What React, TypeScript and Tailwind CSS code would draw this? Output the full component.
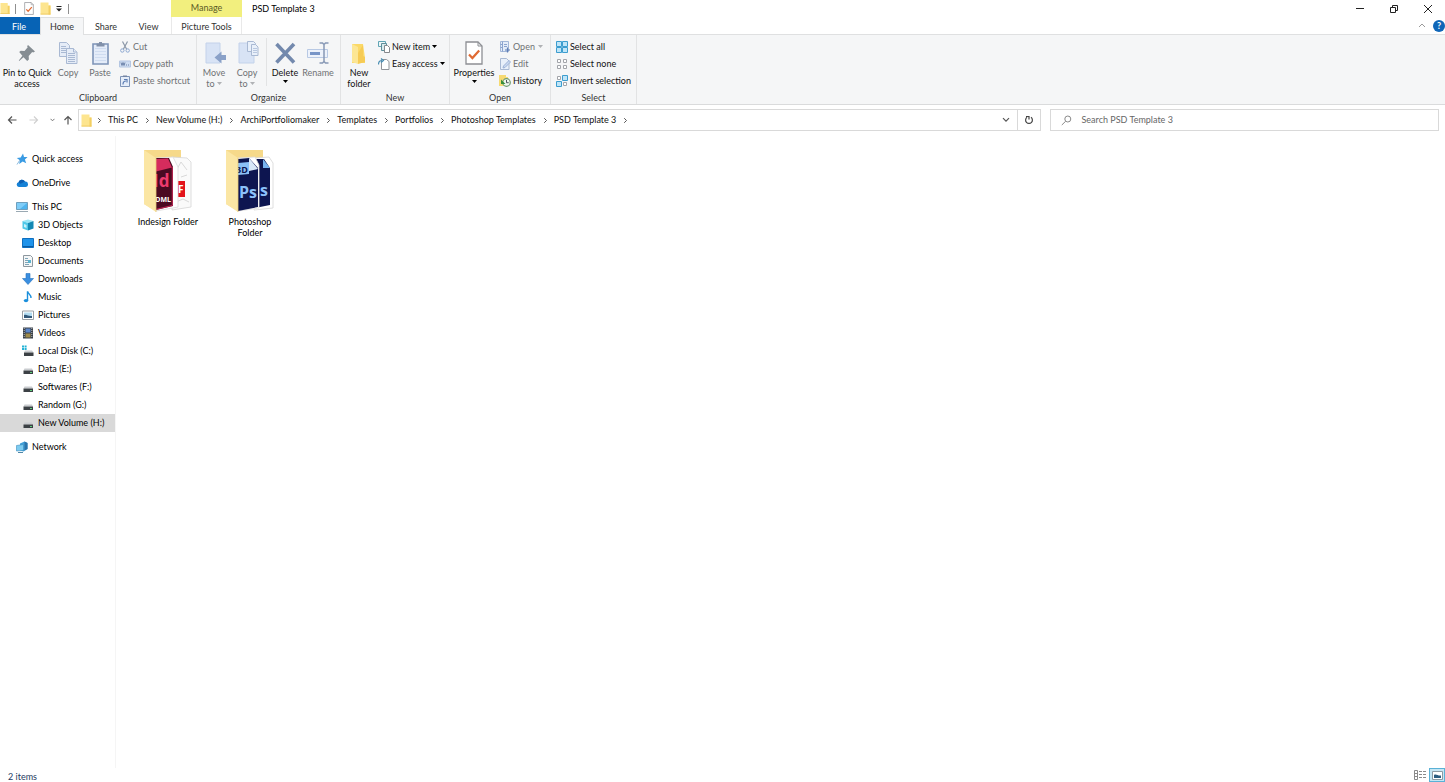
import { useState } from 'react';
import type { ReactNode } from 'react';

interface IconProps {
  className?: string;
}

/* ---------- Small icons ---------- */

const FolderIcon = ({ className = 'w-[11px] h-[13px]' }: IconProps) => (
  <svg viewBox="0 0 11 13" className={className} aria-hidden="true">
    <path d="M0.5 0.5h8v3h2v9h-10z" fill="#fde58f" />
    <path d="M8.5 3.5h2v9h-2z" fill="#f3cf63" />
    <path d="M0.5 11.6h10v0.9h-10z" fill="#efcb62" />
  </svg>
);

const CheckPageIcon = ({ className = 'w-[10px] h-[13px]' }: IconProps) => (
  <svg viewBox="0 0 18 24" className={className} aria-hidden="true">
    <path d="M1 1h12l4 4v18H1z" fill="#fff" stroke="#8d8f94" strokeWidth="1.3" />
    <path d="M13 1v4h4" fill="none" stroke="#8d8f94" />
    <path d="M4 13.5l3.4 3.6 6.8-7.6" fill="none" stroke="#e06a33" strokeWidth="2.2" />
  </svg>
);

const Chevron = ({ className = 'w-[5px] h-[7px]' }: IconProps) => (
  <svg viewBox="0 0 5 7" className={className} aria-hidden="true">
    <path d="M1.2 1.2l2.3 2.3-2.3 2.3" fill="none" stroke="#555" />
  </svg>
);

const Caret = ({ className = 'text-black' }: IconProps) => (
  <svg viewBox="0 0 5 3" className={`w-[5px] h-[3px] ${className}`} aria-hidden="true">
    <path d="M0 0h5L2.5 3z" fill="currentColor" />
  </svg>
);

/* ---------- Ribbon icons ---------- */

const PinIcon = () => (
  <svg viewBox="0 0 24 24" className="w-6 h-6" aria-hidden="true">
    <path d="M13 4l7 6.5-1.8 1-1-.4-3.5 3.8.2 3.6-1.7 1.4-3.7-3.7L4.2 20l-.4-.4 3.6-4.8L4.2 11l1.5-1.3 3.8.2 3.2-3.6-.6-1z" fill="#858d93" />
  </svg>
);

const CopyIcon = () => (
  <svg viewBox="0 0 24 24" className="w-6 h-6" aria-hidden="true">
    <g fill="#e5ecf7" stroke="#a9b9d3">
      <path d="M3.5 1.5h7l3 3v11h-10z" />
      <path d="M5 5.5h5M5 7.5h6M5 9.5h6M5 11.5h6" />
      <path d="M10.5 7.5h7l3.5 3.5v11.5h-10.5z" />
      <path d="M17.5 7.5v3.5h3.5M12 12.5h7M12 14.5h7M12 16.5h7M12 18.5h7M12 20.5h7" />
    </g>
  </svg>
);

const PasteIcon = () => (
  <svg viewBox="0 0 24 24" className="w-6 h-6" aria-hidden="true">
    <path d="M5 3h15v20H5z" fill="#e4ecf9" stroke="#7e94b8" strokeWidth="1.6" />
    <path d="M7 7.5h11M7 10.5h11M7 13.5h11M7 16.5h11M7 19.5h11" stroke="#cfdcf0" />
    <path d="M8.5 2.5h2.5V1h3v1.5h2.5v3h-8z" fill="#8190a9" />
  </svg>
);

const CutIcon = () => (
  <svg viewBox="0 0 12 12" className="w-3 h-3" aria-hidden="true">
    <path d="M3.5 0.5l4.3 8M8.5 0.5l-4.3 8" stroke="#8b97a8" strokeWidth="1.2" />
    <circle cx="3.3" cy="9.5" r="1.7" fill="none" stroke="#8ea9d2" />
    <circle cx="8.7" cy="9.5" r="1.7" fill="none" stroke="#8ea9d2" />
  </svg>
);

const CopyPathIcon = () => (
  <svg viewBox="0 0 12 12" className="w-3 h-3" aria-hidden="true">
    <path d="M0.5 3h11v6h-11z" fill="#cfddf2" stroke="#b4c6e2" />
    <path d="M2 4.5l1 3 1-3 1 3 1-3M7 7h1M9 7h1" fill="none" stroke="#6b82a8" />
  </svg>
);

const PasteShortcutIcon = () => (
  <svg viewBox="0 0 12 12" className="w-3 h-3" aria-hidden="true">
    <path d="M1.5 1.5h9v10h-9z" fill="#e5edf9" stroke="#7e94b8" />
    <path d="M4 0.5h4v1.5H4z" fill="#7485a3" />
    <path d="M4 9.5c0-2.5 1-3.5 3-3.5M5 4.5h3v3" fill="none" stroke="#5b7cb3" strokeWidth="1.2" />
  </svg>
);

const MoveToIcon = () => (
  <svg viewBox="0 0 24 24" className="w-6 h-6" aria-hidden="true">
    <path d="M4 2h14v20H4z" fill="#d8e3f5" stroke="#c3d2ea" />
    <path d="M24 14v5h-4.5v3.5l-7-6 7-6V14z" fill="#8aa1c8" />
  </svg>
);

const CopyToIcon = () => (
  <svg viewBox="0 0 24 24" className="w-6 h-6" aria-hidden="true">
    <path d="M4 2h15v20H4z" fill="#d8e3f5" stroke="#c3d2ea" />
    <path d="M12.5 0.5h6l2 2v8h-8z" fill="#e9f0fa" stroke="#a9b9d3" />
    <path d="M16.5 3.5h4l2.5 2.5v8.5h-6.5z" fill="#e9f0fa" stroke="#a9b9d3" />
    <path d="M18 7.5h4M18 9.5h4M18 11.5h4" stroke="#b9c8e0" />
  </svg>
);

const DeleteIcon = () => (
  <svg viewBox="0 0 24 24" className="w-6 h-6" aria-hidden="true">
    <path d="M3.5 3L21 21.5M21 3L3.5 21.5" stroke="#7389ad" strokeWidth="3.6" />
  </svg>
);

const RenameIcon = () => (
  <svg viewBox="0 0 24 24" className="w-6 h-6" aria-hidden="true">
    <path d="M1.5 8.5h20v8h-20z" fill="#edf2fb" stroke="#b8c9e4" />
    <path d="M4 11h10v3H4z" fill="#7895c7" />
    <path d="M13.5 2h3L18 3.5 19.5 2h3M18 3.5v17M13.5 22h3l1.5-1.5 1.5 1.5h3" fill="none" stroke="#8798b5" strokeWidth="1.5" />
  </svg>
);

const NewFolderIcon = () => (
  <svg viewBox="0 0 24 24" className="w-6 h-6" aria-hidden="true">
    <path d="M5 3h11l2 14v5H5z" fill="#fbd968" />
    <path d="M5 3l6 3v17l-6-2z" fill="#fce694" />
    <path d="M16 4v11l2 1v5l-7 2V12z" fill="#f6cb55" />
  </svg>
);

const NewItemIcon = () => (
  <svg viewBox="0 0 12 12" className="w-3 h-3" aria-hidden="true">
    <path d="M0.5 0.5h7v5h-7z" fill="#eef5f6" stroke="#61a5b5" />
    <path d="M3.5 2.5h5v7h-5z" fill="#d8ecef" stroke="#5e8d99" />
    <path d="M6.5 4.5h3l2 2v5h-5z" fill="#fff" stroke="#85888d" />
  </svg>
);

const EasyAccessIcon = () => (
  <svg viewBox="0 0 12 12" className="w-3 h-3" aria-hidden="true">
    <path d="M3.5 1.5h5l2.5 2v8H3.5z" fill="#fff" stroke="#919499" />
    <path d="M0.5 6.5c0-2.5 1-4 3.5-4M3 0.5l2.5 2L3 4.5" fill="none" stroke="#4a8fb4" strokeWidth="1.2" />
  </svg>
);

const OpenIcon = () => (
  <svg viewBox="0 0 12 12" className="w-3 h-3" aria-hidden="true">
    <path d="M1.5 0.5h8v10h-8z" fill="#e3ecf9" stroke="#a3b7d8" />
    <path d="M3.5 0.5v10M1.5 3.5h2M1.5 6.5h2M5 3.5h3M5 5.5h3" stroke="#8aa3ce" />
    <path d="M6 9h5M8.5 6.5v5" fill="none" stroke="#5f7fb6" strokeWidth="1.2" />
  </svg>
);

const EditIcon = () => (
  <svg viewBox="0 0 12 12" className="w-3 h-3" aria-hidden="true">
    <path d="M1.5 0.5h6L10 3v8.5H1.5z" fill="#e9f0fa" stroke="#a9b9d3" />
    <path d="M4 10l0.5-2L10 2.5 11.5 4 6 9.5z" fill="#cad9f1" stroke="#9db2d6" />
  </svg>
);

const HistoryIcon = () => (
  <svg viewBox="0 0 12 12" className="w-3 h-3" aria-hidden="true">
    <path d="M0 0h7v2h2v9H0z" fill="#f6da72" />
    <circle cx="7.5" cy="7.5" r="3.8" fill="#eef7ec" stroke="#6f9a72" strokeWidth="1.2" />
    <path d="M7.5 5v2.7h2.2" fill="none" stroke="#4d5560" />
    <path d="M2 4.5V9h4.5z" fill="#38903a" />
  </svg>
);

const SelectAllIcon = () => (
  <svg viewBox="0 0 12 12" className="w-3 h-3" aria-hidden="true">
    <path d="M0.5 0.5h5v5h-5zM6.5 0.5h5v5h-5zM0.5 6.5h5v5h-5zM6.5 6.5h5v5h-5z" fill="#bfe5f8" stroke="#3c9dcf" />
  </svg>
);

const SelectNoneIcon = () => (
  <svg viewBox="0 0 12 12" className="w-3 h-3" aria-hidden="true">
    <path d="M1.5 1.5h3v3h-3zM7.5 1.5h3v3h-3zM1.5 7.5h3v3h-3zM7.5 7.5h3v3h-3z" fill="#fff" stroke="#a2a5aa" />
  </svg>
);

const InvertIcon = () => (
  <svg viewBox="0 0 12 12" className="w-3 h-3" aria-hidden="true">
    <path d="M1.5 1.5h3v3h-3zM7.5 7.5h3v3h-3z" fill="#fff" stroke="#a2a5aa" />
    <path d="M6.5 0.5h5v5h-5zM0.5 6.5h5v5h-5z" fill="#bfe5f8" stroke="#3c9dcf" />
  </svg>
);

/* ---------- Navigation pane icons ---------- */

const StarIcon = () => (
  <svg viewBox="0 0 12 12" className="w-3 h-3" aria-hidden="true">
    <path d="M7 0.5l1 3.4 3.6.2-2.7 2.4 1.3 3.8-3.5-1.9L3.2 11l.6-3.8L0.8 5l3.9-.5z" fill="#3a9be3" />
    <path d="M3.8 7.2L1 11.5" stroke="#8ab9dc" />
  </svg>
);

const CloudIcon = () => (
  <svg viewBox="0 0 12 12" className="w-3 h-3" aria-hidden="true">
    <path d="M2.8 10a2.4 2.4 0 0 1-.3-4.7A3.6 3.6 0 0 1 9 4.6 2.7 2.7 0 0 1 9.6 10z" fill="#1581d6" />
    <path d="M2.5 5.3A3.6 3.6 0 0 1 9 4.6L4.5 6.8z" fill="#0d5fb3" />
  </svg>
);

const PcIcon = () => (
  <svg viewBox="0 0 12 12" className="w-3 h-3" aria-hidden="true">
    <path d="M0.5 1.5h11v7h-11z" fill="#4fb4ee" stroke="#6e9fbd" />
    <path d="M1 2h10L4 8H1z" fill="#7fcdf8" />
    <path d="M0 10.5h12" stroke="#9aa9b3" />
  </svg>
);

const CubeIcon = () => (
  <svg viewBox="0 0 12 12" className="w-3 h-3" aria-hidden="true">
    <path d="M0.5 2L6 0.5 11.5 2 6 4z" fill="#9be6f6" />
    <path d="M0.5 2L6 4v7.5l-5.5-2z" fill="#4fc8e8" />
    <path d="M11.5 2L6 4v7.5l5.5-2z" fill="#1389b5" />
    <path d="M2 5l2.5 1v3L2 8z" fill="#c8f2fb" />
  </svg>
);

const DesktopIcon = () => (
  <svg viewBox="0 0 12 12" className="w-3 h-3" aria-hidden="true">
    <path d="M0.5 1.5h11v9h-11z" fill="#1f93ea" stroke="#0f6fbf" />
    <path d="M1 9.5h10" stroke="#0c5ba0" />
  </svg>
);

const DocumentIcon = () => (
  <svg viewBox="0 0 12 12" className="w-3 h-3" aria-hidden="true">
    <path d="M1.5 0.5h7l2 2v9h-9z" fill="#f4f6f7" stroke="#8d979e" />
    <path d="M3 3.5h3M3 5.5h6M3 7.5h6M3 9.5h4" stroke="#7fa5b7" />
    <path d="M6 5h3v3H6z" fill="#5bb3cf" />
  </svg>
);

const DownloadIcon = () => (
  <svg viewBox="0 0 12 12" className="w-3 h-3" aria-hidden="true">
    <path d="M4 0.5h4v5h3.5l-5.500 6-5.500-6H4z" fill="#3a8ee0" stroke="#2773bd" strokeWidth="0.6" />
  </svg>
);

const MusicIcon = () => (
  <svg viewBox="0 0 12 12" className="w-3 h-3" aria-hidden="true">
    <path d="M5.5 0.5C6 3 9.500 3.500 9 7" fill="none" stroke="#1b8fdc" strokeWidth="1.4" />
    <path d="M5.5 0.5v9" stroke="#1b8fdc" strokeWidth="1.4" />
    <ellipse cx="4" cy="9.6" rx="2.2" ry="1.7" fill="#1b8fdc" />
  </svg>
);

const PictureIcon = () => (
  <svg viewBox="0 0 12 12" className="w-3 h-3" aria-hidden="true">
    <path d="M0.5 2h11v8.5h-11z" fill="#fff" stroke="#9aa0a5" />
    <path d="M2 3.5h8V9H2z" fill="#b3dcf1" />
    <path d="M2 6c3-1 4 1.500 8 1v2H2z" fill="#33597a" />
  </svg>
);

const VideoIcon = () => (
  <svg viewBox="0 0 12 12" className="w-3 h-3" aria-hidden="true">
    <path d="M1 0.5h10v11H1z" fill="#3b4148" />
    <path d="M3.5 1.5h5v4h-5z" fill="#5c86c8" />
    <path d="M3.5 6.5h5v4h-5z" fill="#9f8b4a" />
    <path d="M2.2 1v10M9.8 1v10" stroke="#b9bec4" strokeDasharray="1 1" />
  </svg>
);

const DriveIcon = () => (
  <svg viewBox="0 0 12 12" className="w-3 h-3" aria-hidden="true">
    <path d="M2.5 5.5H10l1 2H1.5z" fill="#c9cccf" />
    <path d="M1.5 7.5H11V11H1.5z" fill="#3c4145" />
    <path d="M8 9.5h2" stroke="#5ed07c" />
  </svg>
);

const SystemDriveIcon = () => (
  <svg viewBox="0 0 12 12" className="w-3 h-3" aria-hidden="true">
    <path d="M0 0.500h2v2H0zM2.600 0.500h2v2h-2zM0 3.100h2v2H0zM2.600 3.100h2v2h-2z" fill="#25b3d6" />
    <path d="M3 5.5h7l1.500 2H2z" fill="#c9cccf" />
    <path d="M2 7.5h9.500V11H2z" fill="#3c4145" />
  </svg>
);

const NetworkIcon = () => (
  <svg viewBox="0 0 12 12" className="w-3 h-3" aria-hidden="true">
    <path d="M4 2.5l4.500-2 3 1.500v6l-4 2.500L4 9.500z" fill="#3f9fd8" />
    <path d="M8.500 0.500l3 1.500v6l-3 1.500z" fill="#2a73a9" />
    <path d="M0.500 4.500l7-1v6l-7 0.500z" fill="#7dcbf0" stroke="#3d8fc0" strokeWidth="0.6" />
    <path d="M2 11.500h5" stroke="#4f87a8" />
  </svg>
);

/* ---------- Folder thumbnails ---------- */

const IndesignFolderIcon = () => (
  <svg viewBox="0 0 48 62" className="w-12 h-[62px]" aria-hidden="true">
    <path d="M0 0h37v52L12 61 0 54z" fill="#f6d98a" />
    <path d="M28 7l15 1 4 4v45l-19 3z" fill="#fafafa" stroke="#d5d5d5" strokeWidth="0.8" />
    <path d="M33 19l4-7 6 8M32 52l7-3 6 3M37 27l6-2" fill="none" stroke="#d9d9d9" />
    <path d="M31 31h10v16H31z" fill="#e3131b" />
    <text x="34" y="43" fontSize="10" fontWeight="bold" fill="#fff" fontFamily="Open Sans, sans-serif">F</text>
    <path d="M12 8l17-1 5 10v40l-22 4z" fill="#fff" stroke="#d9d9d9" strokeWidth="0.8" />
    <path d="M12 8h13l4 9v39l-17 4z" fill="#4b0a22" />
    <path d="M12 9l12-0.500 4 9-16 4z" fill="#d52c5d" />
    <path d="M28.300 17v38.500l-16 3.800" fill="none" stroke="#c72757" />
    <text x="9" y="37" fontSize="17" fontWeight="bold" fill="#ee3a6e" fontFamily="Open Sans, sans-serif">Id</text>
    <text x="9" y="52" fontSize="7" fontWeight="bold" fill="#fff" fontFamily="Open Sans, sans-serif">IDML</text>
    <path d="M0 0l12 8v54L0 54z" fill="#fbe6a4" />
    <path d="M12 8v54" stroke="#e8c977" strokeWidth="0.8" />
  </svg>
);

const PhotoshopFolderIcon = () => (
  <svg viewBox="0 0 48 62" className="w-12 h-[62px]" aria-hidden="true">
    <path d="M0 0h37v52L12 61 0 54z" fill="#f6d98a" />
    <path d="M28 8l15-1 4 6v45l-19 2z" fill="#fff" stroke="#d5d5d5" strokeWidth="0.8" />
    <path d="M29 9h9l6 9v37l-15 3z" fill="#0d1550" />
    <path d="M37 9l7 9h-7z" fill="#78b3ef" />
    <text x="34" y="46" fontSize="16" fontWeight="bold" fill="#8cc1fa" fontFamily="Open Sans, sans-serif">s</text>
    <path d="M12 8l17-1 4 8v43l-21 3z" fill="#fff" stroke="#d9d9d9" strokeWidth="0.8" />
    <path d="M12 9l11-1 9 10v39l-20 4z" fill="#0d1550" />
    <path d="M12 13l11-1v12l-11 1z" fill="#8bc0f6" />
    <path d="M23 8l9 11-9 2z" fill="#d7e7f7" />
    <text x="10" y="23" fontSize="9" fontWeight="bold" fill="#0d1550" fontFamily="Open Sans, sans-serif">3D</text>
    <text x="13" y="48" fontSize="16" fontWeight="bold" fill="#8cc1fa" fontFamily="Open Sans, sans-serif">Ps</text>
    <path d="M0 0l12 8v54L0 54z" fill="#fbe6a4" />
    <path d="M12 8v54" stroke="#e8c977" strokeWidth="0.8" />
  </svg>
);

/* ---------- Ribbon building blocks ---------- */

interface BigButtonProps {
  icon: ReactNode;
  lines: string[];
  width: string;
  disabled?: boolean;
  caret?: 'inline' | 'below';
}

function BigButton({ icon, lines, width, disabled, caret }: BigButtonProps) {
  return (
    <button
      type="button"
      disabled={disabled}
      className={`flex flex-col items-center pt-[3px] leading-[11px] whitespace-nowrap ${width} ${disabled ? 'text-[#6f7174]' : 'text-[#111]'}`}
    >
      <span className="mb-[2px]">{icon}</span>
      {lines.map((line, i) => (
        <span key={line} className="flex items-center gap-[2px]">
          {line}
          {caret === 'inline' && i === lines.length - 1 && <Caret className="text-[#b0b2b5]" />}
        </span>
      ))}
      {caret === 'below' && <Caret className="mt-[2px] text-black" />}
    </button>
  );
}

interface SmallButtonProps {
  icon: ReactNode;
  label: string;
  disabled?: boolean;
  caret?: boolean;
}

function SmallButton({ icon, label, disabled, caret }: SmallButtonProps) {
  return (
    <button
      type="button"
      disabled={disabled}
      className={`flex items-center gap-[2px] h-[17px] whitespace-nowrap ${disabled ? 'text-[#6f7174]' : 'text-[#111]'}`}
    >
      {icon}
      <span>{label}</span>
      {caret && <Caret className={disabled ? 'ml-px text-[#b0b2b5]' : 'text-black'} />}
    </button>
  );
}

function RibbonGroup({ label, width, children }: { label: string; width: string; children: ReactNode }) {
  return (
    <section aria-label={label} className={`flex flex-col shrink-0 pt-[3px] border-r border-[#e2e3e4] ${width}`}>
      <div className="flex flex-1 items-start">{children}</div>
      <div className="h-[13px] leading-[13px] text-center text-[#333]">{label}</div>
    </section>
  );
}

/* ---------- Data ---------- */

const crumbs = ['This PC', 'New Volume (H:)', 'ArchiPortfoliomaker', 'Templates', 'Portfolios', 'Photoshop Templates', 'PSD Template 3'];

const places = [
  { name: 'Quick access', icon: <StarIcon />, top: true },
  { name: 'OneDrive', icon: <CloudIcon />, top: true },
  { name: 'This PC', icon: <PcIcon />, top: true },
  { name: '3D Objects', icon: <CubeIcon /> },
  { name: 'Desktop', icon: <DesktopIcon /> },
  { name: 'Documents', icon: <DocumentIcon /> },
  { name: 'Downloads', icon: <DownloadIcon /> },
  { name: 'Music', icon: <MusicIcon /> },
  { name: 'Pictures', icon: <PictureIcon /> },
  { name: 'Videos', icon: <VideoIcon /> },
  { name: 'Local Disk (C:)', icon: <SystemDriveIcon /> },
  { name: 'Data (E:)', icon: <DriveIcon /> },
  { name: 'Softwares (F:)', icon: <DriveIcon /> },
  { name: 'Random (G:)', icon: <DriveIcon /> },
  { name: 'New Volume (H:)', icon: <DriveIcon /> },
  { name: 'Network', icon: <NetworkIcon />, top: true },
];

const folders = [
  { name: 'Indesign Folder', icon: <IndesignFolderIcon /> },
  { name: 'Photoshop Folder', icon: <PhotoshopFolderIcon /> },
];

export default function App() {
  const [currentPlace, setCurrentPlace] = useState('New Volume (H:)');
  const [search, setSearch] = useState('');

  return (
    <div className="min-h-screen flex flex-col bg-white text-[9px] leading-[12px] text-[#111] font-['Lato','Open_Sans',sans-serif]">
      {/* Title bar */}
      <header className="flex h-[17px]">
        <div className="flex items-center w-[171px] shrink-0">
          <FolderIcon className="w-[10px] h-[13px]" />
          <span className="ml-[5px] w-px h-[10px] bg-[#8f8f8f]" />
          <button type="button" aria-label="Properties" className="ml-2">
            <CheckPageIcon />
          </button>
          <button type="button" aria-label="New folder" className="ml-[6px]">
            <FolderIcon />
          </button>
          <button type="button" aria-label="Customize Quick Access Toolbar" className="ml-[5px]">
            <svg viewBox="0 0 6 6" className="w-[6px] h-[6px]">
              <path d="M0.5 0.5h5" stroke="#222" />
              <path d="M0 2.5h6l-3 3z" fill="#222" />
            </svg>
          </button>
          <span className="ml-[6px] w-px h-[10px] bg-[#8f8f8f]" />
        </div>
        <div className="w-[71px] shrink-0 bg-[#f2ef7e] text-center leading-[16px] text-[#5b5a26]">Manage</div>
        <h1 className="flex-1 pl-[10px] leading-[18px] text-black">PSD Template 3</h1>
        <div className="flex items-center text-[#222]">
          <button type="button" aria-label="Minimize" className="w-[34px] flex justify-center">
            <svg viewBox="0 0 10 10" className="w-[10px] h-[10px]"><path d="M1 4.5h8" stroke="currentColor" /></svg>
          </button>
          <button type="button" aria-label="Restore" className="w-[34px] flex justify-center">
            <svg viewBox="0 0 10 10" className="w-[10px] h-[10px]">
              <path d="M1.5 3.5h5v5h-5zM3.5 3V1.5h5v5H7" fill="none" stroke="currentColor" />
            </svg>
          </button>
          <button type="button" aria-label="Close" className="w-[34px] flex justify-center">
            <svg viewBox="0 0 10 10" className="w-[10px] h-[10px]"><path d="M1 1l8 8M9 1L1 9" stroke="currentColor" /></svg>
          </button>
        </div>
      </header>

      {/* Ribbon tabs */}
      <nav className="flex h-[18px] leading-[19px] text-[#333] border-b border-[#dfe0e1]">
        <button type="button" className="w-[40px] pr-[2px] bg-[#0763b5] text-white">File</button>
        <button type="button" className="w-[44px] h-[18px] bg-[#f5f6f7] border-x border-t border-[#dfe0e1] leading-[18px]">Home</button>
        <button type="button" className="w-[44px]">Share</button>
        <button type="button" className="w-[43px] pr-[2px]">View</button>
        <button type="button" className="w-[71px] border-x border-[#e9e9e9] whitespace-nowrap">Picture Tools</button>
        <div className="ml-auto flex items-center gap-[7px]">
          <button type="button" aria-label="Minimize the Ribbon">
            <svg viewBox="0 0 8 5" className="w-[8px] h-[5px]"><path d="M1 4l3-3 3 3" fill="none" stroke="#9a9a9a" /></svg>
          </button>
          <button type="button" aria-label="Help" className="w-[12px] h-[12px] rounded-full bg-[#0f66b8] text-white font-bold leading-[12px]">?</button>
        </div>
      </nav>

      {/* Ribbon */}
      <div className="flex h-[70px] bg-[#f5f6f7] border-b border-[#dadbdc]">
        <RibbonGroup label="Clipboard" width="w-[197px]">
          <BigButton icon={<PinIcon />} lines={['Pin to Quick', 'access']} width="w-[54px]" />
          <BigButton icon={<CopyIcon />} lines={['Copy']} width="w-[28px]" disabled />
          <BigButton icon={<PasteIcon />} lines={['Paste']} width="w-[36px]" disabled />
          <div className="pl-px">
            <SmallButton icon={<CutIcon />} label="Cut" disabled />
            <SmallButton icon={<CopyPathIcon />} label="Copy path" disabled />
            <SmallButton icon={<PasteShortcutIcon />} label="Paste shortcut" disabled />
          </div>
        </RibbonGroup>

        <RibbonGroup label="Organize" width="w-[144px]">
          <BigButton icon={<MoveToIcon />} lines={['Move', 'to']} width="w-[34px]" disabled caret="inline" />
          <BigButton icon={<CopyToIcon />} lines={['Copy', 'to']} width="w-[32px]" disabled caret="inline" />
          <span className="mx-[3px] w-px h-[48px] bg-[#e2e3e4]" />
          <BigButton icon={<DeleteIcon />} lines={['Delete']} width="w-[30px]" caret="below" />
          <BigButton icon={<RenameIcon />} lines={['Rename']} width="w-[36px]" disabled />
        </RibbonGroup>

        <RibbonGroup label="New" width="w-[109px]">
          <BigButton icon={<NewFolderIcon />} lines={['New', 'folder']} width="w-[36px]" />
          <div className="pl-px">
            <SmallButton icon={<NewItemIcon />} label="New item" caret />
            <SmallButton icon={<EasyAccessIcon />} label="Easy access" caret />
          </div>
        </RibbonGroup>

        <RibbonGroup label="Open" width="w-[101px]">
          <BigButton icon={<CheckPageIcon className="w-[18px] h-6" />} lines={['Properties']} width="w-[48px]" caret="below" />
          <div className="pl-px">
            <SmallButton icon={<OpenIcon />} label="Open" disabled caret />
            <SmallButton icon={<EditIcon />} label="Edit" disabled />
            <SmallButton icon={<HistoryIcon />} label="History" />
          </div>
        </RibbonGroup>

        <RibbonGroup label="Select" width="w-[86px]">
          <div className="pl-[5px]">
            <SmallButton icon={<SelectAllIcon />} label="Select all" />
            <SmallButton icon={<SelectNoneIcon />} label="Select none" />
            <SmallButton icon={<InvertIcon />} label="Invert selection" />
          </div>
        </RibbonGroup>
      </div>

      {/* Address bar */}
      <div className="flex items-center pt-1 pb-[5px] pr-[6px]">
        <div className="flex items-center w-[78px] shrink-0 pl-[7px]">
          <button type="button" aria-label="Back">
            <svg viewBox="0 0 10 10" className="w-[10px] h-[10px]"><path d="M9.5 5h-8M5 1.5L1.5 5 5 8.5" fill="none" stroke="#555" strokeWidth="1.2" /></svg>
          </button>
          <button type="button" aria-label="Forward" className="ml-3" disabled>
            <svg viewBox="0 0 10 10" className="w-[10px] h-[10px]"><path d="M0.5 5h8M5 1.5L8.5 5 5 8.5" fill="none" stroke="#d0d0d0" strokeWidth="1.2" /></svg>
          </button>
          <button type="button" aria-label="Recent locations" className="ml-[11px]">
            <svg viewBox="0 0 5 4" className="w-[5px] h-[4px]"><path d="M0.5 0.8l2 2 2-2" fill="none" stroke="#777" /></svg>
          </button>
          <button type="button" aria-label="Up" className="ml-2">
            <svg viewBox="0 0 10 10" className="w-[10px] h-[10px]"><path d="M5 9.5v-8M1.5 5L5 1.5 8.5 5" fill="none" stroke="#555" strokeWidth="1.2" /></svg>
          </button>
        </div>

        <div className="flex flex-1 items-center h-[22px] border border-[#d9d9d9]">
          <FolderIcon className="ml-[2px] w-[11px] h-[13px]" />
          <Chevron className="ml-[5px] w-[5px] h-[7px]" />
          {crumbs.map((crumb) => (
            <span key={crumb} className="flex items-center">
              <button type="button" className="ml-[6px] mr-[7px] whitespace-nowrap">{crumb}</button>
              <Chevron />
            </span>
          ))}
          <button type="button" aria-label="Previous locations" className="ml-auto w-[22px] flex justify-center">
            <svg viewBox="0 0 8 6" className="w-[8px] h-[6px]"><path d="M1 1.2l3 3 3-3" fill="none" stroke="#555" strokeWidth="1.2" /></svg>
          </button>
          <button type="button" aria-label="Refresh" className="w-[23px] self-stretch flex items-center justify-center border-l border-[#d9d9d9]">
            <svg viewBox="0 0 10 10" className="w-[10px] h-[10px]">
              <path d="M3 2.3a3.4 3.4 0 1 0 4 0M2 1.5h3v3" fill="none" stroke="#444" strokeWidth="1.2" />
            </svg>
          </button>
        </div>

        <label className="ml-[9px] w-[27%] h-[22px] flex items-center border border-[#d9d9d9] pl-[10px]">
          <svg viewBox="0 0 11 11" className="w-[11px] h-[11px]" aria-hidden="true">
            <circle cx="6.8" cy="4" r="3" fill="none" stroke="#8a8a8a" />
            <path d="M4.7 6.2L0.8 10" stroke="#8a8a8a" />
          </svg>
          <input
            type="text"
            aria-label="Search PSD Template 3"
            placeholder="Search PSD Template 3"
            value={search}
            onChange={(e) => setSearch(e.target.value)}
            className="flex-1 ml-[9px] outline-none placeholder:text-[#666]"
          />
        </label>
      </div>

      {/* Navigation pane and folder content */}
      <div className="flex flex-1">
        <nav className="w-[116px] shrink-0 pt-[14px] border-r border-[#f5f5f5] text-black">
          {places.map((place, i) => (
            <button
              key={place.name}
              type="button"
              onClick={() => setCurrentPlace(place.name)}
              className={`flex items-center gap-[4px] w-full h-[18px] whitespace-nowrap ${place.top ? 'pl-4' : 'pl-[22px]'} ${place.top && i > 0 ? 'mt-[6px]' : ''} ${currentPlace === place.name ? 'bg-[#d9d9d9]' : ''}`}
            >
              {place.icon}
              <span>{place.name}</span>
            </button>
          ))}
        </nav>

        <main className="flex flex-1 items-start pt-[14px] pl-[11px]">
          {folders.map((folder) => (
            <button key={folder.name} type="button" className="flex flex-col items-center w-[82px] px-2 text-black leading-[11px]">
              {folder.icon}
              <span className="mt-1">{folder.name}</span>
            </button>
          ))}
        </main>
      </div>

      {/* Status bar */}
      <footer className="flex items-end h-[14px] pl-2 text-[#1e3a5f]">
        <span className="leading-[10px]">2 items</span>
        <div className="ml-auto flex items-center gap-[2px]">
          <button type="button" aria-label="Details view">
            <svg viewBox="0 0 13 12" className="w-[13px] h-[12px]">
              <path d="M0.5 1.5h3v9h-3zM0.5 4.5h3M0.5 7.5h3" fill="none" stroke="#8a8a8a" />
              <path d="M5 2.5h3M9 2.5h3M5 5.5h3M9 5.5h3M5 8.5h3M9 8.5h3" stroke="#8a8a8a" />
            </svg>
          </button>
          <button type="button" aria-label="Large icons view" className="flex items-center justify-center w-4 h-[14px] bg-[#c5e6f4] border border-[#5ab1d6]">
            <svg viewBox="0 0 11 9" className="w-[11px] h-[9px]">
              <path d="M0.5 0.5h10v8h-10z" fill="#fff" stroke="#8b9aa3" />
              <path d="M2 4c2-1.5 4 1 7 0.500V7H2z" fill="#2c5d80" />
            </svg>
          </button>
        </div>
      </footer>
    </div>
  );
}
